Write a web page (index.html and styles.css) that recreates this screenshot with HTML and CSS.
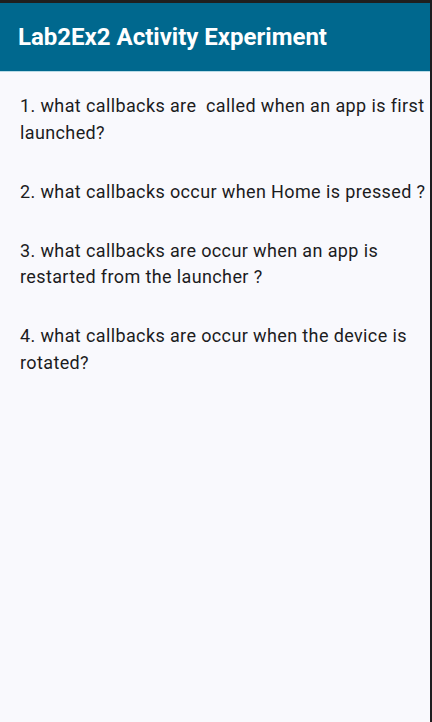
FILE: index.html
```html
<!DOCTYPE html>
<html>
<head>
<meta charset="utf-8">
<link rel="stylesheet" href="styles.css">
</head>
<body>
<div class="screen">
  <div class="status"></div>
  <header class="appbar"><h1 class="title">Lab2Ex2 Activity Experiment</h1></header>
  <main class="content">
    <p class="q">1. what callbacks are &nbsp;called when an app is first launched?</p>
    <p class="q">2. what callbacks occur when Home is pressed ?</p>
    <p class="q">3. what callbacks are occur when an app is restarted from the launcher ?</p>
    <p class="q">4. what callbacks are occur when the device is rotated?</p>
  </main>
</div>
</body>
</html>
```
FILE: styles.css
```css
html, body { margin: 0; padding: 0; }
body { background: #1d1d1f; font-family: Roboto, "Noto Sans", sans-serif; }
.screen { width: 430px; height: 722px; background: #f9f9fd; display: flex; flex-direction: column; }
.status { height: 3px; background: #1f1f1f; }
.appbar { height: 69px; background: #00688e; display: flex; align-items: center; padding: 0 18px; box-sizing: border-box; border-bottom: 1px solid #b9dbe6; }
.title { margin: 0 0 1px 0; color: #fff; font-size: 24px; font-weight: 700; letter-spacing: 0; }
.content { padding: 21px 4px 0 20px; }
.q { margin: 0 0 32.5px 0; font-size: 18px; line-height: 26.5px; color: #1c1c1e; letter-spacing: 0.38px; }
```
